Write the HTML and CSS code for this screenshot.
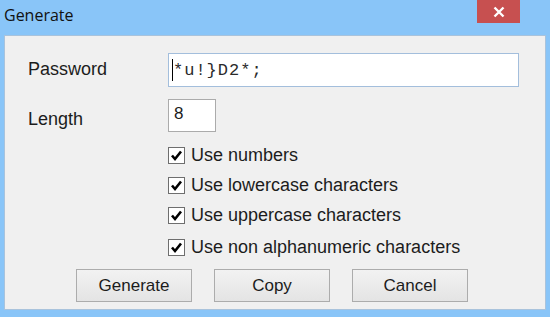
FILE: index.html
```html
<!DOCTYPE html>
<html lang="en">
<head>
  <meta charset="UTF-8">
  <title>Generate</title>
  <link rel="stylesheet" href="styles.css">
</head>
<body>
  <div class="janela">
    <div class="titulo">
      <span class="titulo-texto">Generate</span>
      <span class="fechar">
        <svg width="12" height="12" viewBox="0 0 12 12">
          <path d="M1.5 1.5 L10.5 10.5 M10.5 1.5 L1.5 10.5" stroke="#fff" stroke-width="2.4"/>
        </svg>
      </span>
    </div>
    <div class="conteudo">
      <div class="linha">
        <label class="rotulo">Password</label>
        <div class="campo campo-senha"><span class="cursor"></span>*u!}D2*;</div>
      </div>
      <div class="linha linha-tamanho">
        <label class="rotulo rotulo-tamanho">Length</label>
        <div class="campo campo-tamanho">8</div>
      </div>
      <div class="opcoes">
        <div class="opcao"><span class="caixa"><svg width="13" height="13" viewBox="0 0 13 13"><path d="M2 6.5 L5 10 L11 2.5" fill="none" stroke="#000" stroke-width="2.6"/></svg></span>Use numbers</div>
        <div class="opcao"><span class="caixa"><svg width="13" height="13" viewBox="0 0 13 13"><path d="M2 6.5 L5 10 L11 2.5" fill="none" stroke="#000" stroke-width="2.6"/></svg></span>Use lowercase characters</div>
        <div class="opcao"><span class="caixa"><svg width="13" height="13" viewBox="0 0 13 13"><path d="M2 6.5 L5 10 L11 2.5" fill="none" stroke="#000" stroke-width="2.6"/></svg></span>Use uppercase characters</div>
        <div class="opcao opcao-ultima"><span class="caixa"><svg width="13" height="13" viewBox="0 0 13 13"><path d="M2 6.5 L5 10 L11 2.5" fill="none" stroke="#000" stroke-width="2.6"/></svg></span>Use non alphanumeric characters</div>
      </div>
      <div class="botoes">
        <button class="botao">Generate</button>
        <button class="botao">Copy</button>
        <button class="botao">Cancel</button>
      </div>
    </div>
  </div>
</body>
</html>
```

FILE: styles.css
```css
html, body {
  margin: 0;
  padding: 0;
}
body {
  background-color: #89c5f8;
  font-family: "Liberation Sans", Arial, sans-serif;
  color: #1c1c1c;
}
.janela {
  width: 550px;
  height: 317px;
}
.titulo {
  height: 35px;
  display: flex;
  justify-content: space-between;
  align-items: flex-start;
}
.titulo-texto {
  font-family: "Open Sans", "Noto Sans", sans-serif;
  font-size: 16px;
  padding: 4px 0 0 4px;
  color: #111;
}
.fechar {
  width: 43px;
  height: 23px;
  margin-right: 30px;
  background-color: #c75050;
  display: flex;
  align-items: center;
  justify-content: center;
}
.conteudo {
  margin: 0 4px;
  height: 275px;
  background-color: #f0f0f0;
  border: 1px solid #a9c3dc;
  padding: 17px 26px 0 23px;
  box-sizing: border-box;
  font-size: 18px;
}
.linha {
  display: grid;
  grid-template-columns: 140px 1fr;
  align-items: center;
}
.linha-tamanho {
  margin-top: 12px;
}
.rotulo {
  padding-bottom: 2px;
}
.rotulo-tamanho {
  padding: 8px 0 0;
}
.campo {
  background-color: #fff;
  box-sizing: border-box;
  display: flex;
  align-items: center;
}
.campo-senha {
  height: 34px;
  border: 1px solid #a3bedc;
  font-family: "Liberation Mono", "Courier New", monospace;
  font-size: 17px;
  letter-spacing: 1px;
  padding-left: 3px;
  color: #2a2a2a;
}
.cursor {
  width: 1px;
  height: 22px;
  background-color: #000;
}
.campo-tamanho {
  width: 48px;
  height: 33px;
  border: 1px solid #ababab;
  padding: 0 0 3px 5px;
  font-size: 17px;
}
.opcoes {
  margin: 13px 0 0 140px;
  display: flex;
  flex-direction: column;
  gap: 10px;
}
.opcao {
  display: flex;
  align-items: center;
  height: 20px;
}
.opcao-ultima {
  margin-top: 2px;
}
.caixa {
  width: 17px;
  height: 17px;
  box-sizing: border-box;
  border: 1px solid #6e6e6e;
  background-color: #fff;
  margin-right: 6px;
  display: flex;
  align-items: center;
  justify-content: center;
}
.botoes {
  display: flex;
  gap: 22px;
  margin: 12px 0 0 48px;
}
.botao {
  width: 116px;
  height: 33px;
  font-family: "Liberation Sans", Arial, sans-serif;
  font-size: 17px;
  color: #1c1c1c;
  border: 1px solid #acacac;
  background: linear-gradient(#f2f2f2, #e4e4e4);
  padding: 0;
}
```
